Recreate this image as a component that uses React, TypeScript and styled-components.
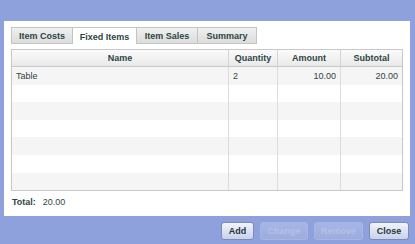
import React from 'react';
import styled, { createGlobalStyle } from 'styled-components';

const GlobalStyle = createGlobalStyle`
  html, body {
    margin: 0;
    padding: 0;
    background: #8ea1dc;
    font-family: 'Liberation Sans', Arial, sans-serif;
  }
`;

const Screen = styled.div`
  width: 415px;
  height: 244px;
  box-sizing: border-box;
  padding: 21px 5px 0 4px;
  display: flex;
  flex-direction: column;
`;

const Panel = styled.div`
  background: #ffffff;
  height: 195px;
  box-sizing: border-box;
  padding: 6px 7px 0 7px;
  display: flex;
  flex-direction: column;
`;

const TabBar = styled.div`
  display: flex;
  height: 17px;
`;

const Tab = styled.div<{ $active?: boolean; $w: number }>`
  width: ${(p) => p.$w}px;
  box-sizing: border-box;
  border: 1px solid #c4c4c4;
  border-bottom: ${(p) => (p.$active ? 'none' : '1px solid #c4c4c4')};
  margin-left: -1px;
  background: ${(p) =>
    p.$active ? '#ffffff' : 'linear-gradient(#f0f0f0, #dcdcdc)'};
  color: #2e4444;
  font-size: 9px;
  font-weight: bold;
  display: flex;
  align-items: center;
  justify-content: center;
  padding-top: ${(p) => (p.$active ? '2px' : '0')};
  &:first-child {
    margin-left: 0;
  }
`;

const Grid = styled.div`
  margin-top: 5px;
  width: 392px;
  box-sizing: border-box;
  border: 1px solid #c8c8c8;
  display: grid;
  grid-template-columns: 216px 49px 63px 1fr;
`;

const HeadCell = styled.div`
  height: 17px;
  box-sizing: border-box;
  background: linear-gradient(#fbfbfb, #e9e9e9);
  border-bottom: 1px solid #c8c8c8;
  border-left: 1px solid #d4d4d4;
  color: #2e4444;
  font-size: 9px;
  font-weight: bold;
  display: flex;
  align-items: center;
  justify-content: center;
  &:first-child {
    border-left: none;
  }
`;

const Cell = styled.div<{ $odd: boolean; $right?: boolean; $first?: boolean }>`
  height: 17.6px;
  box-sizing: border-box;
  background: ${(p) => (p.$odd ? '#f5f5f5' : '#ffffff')};
  border-left: ${(p) => (p.$first ? 'none' : '1px solid #dcdcdc')};
  color: #2e4444;
  font-size: 9px;
  display: flex;
  align-items: center;
  justify-content: ${(p) => (p.$right ? 'flex-end' : 'flex-start')};
  padding: 0 4px;
`;

const TotalLine = styled.div`
  display: flex;
  gap: 7px;
  margin-top: 6px;
  padding-left: 1px;
  font-size: 9px;
  color: #2e4444;
`;

const TotalLabel = styled.span`
  font-weight: bold;
`;

const ButtonRow = styled.div`
  display: flex;
  justify-content: flex-end;
  gap: 6px;
  margin-top: 6px;
  margin-right: 1px;
`;

const Button = styled.div<{ $w: number; $disabled?: boolean }>`
  width: ${(p) => p.$w}px;
  height: 18px;
  box-sizing: border-box;
  border: 1px solid ${(p) => (p.$disabled ? '#a9b6e2' : '#7d8bb8')};
  border-radius: 3px;
  background: ${(p) =>
    p.$disabled
      ? 'linear-gradient(#a7b5e6, #9cacdf)'
      : 'linear-gradient(#f2f4fa, #c9d1ea)'};
  color: ${(p) => (p.$disabled ? '#b5c1e8' : '#1f3540')};
  font-size: 9px;
  font-weight: bold;
  display: flex;
  align-items: center;
  justify-content: center;
`;

const tabs = [
  { label: 'Item Costs', w: 62 },
  { label: 'Fixed Items', w: 65 },
  { label: 'Item Sales', w: 62 },
  { label: 'Summary', w: 60 },
];

const rows = [
  ['Table', '2', '10.00', '20.00'],
  ['', '', '', ''],
  ['', '', '', ''],
  ['', '', '', ''],
  ['', '', '', ''],
  ['', '', '', ''],
  ['', '', '', ''],
];

export default function App() {
  return (
    <>
      <GlobalStyle />
      <Screen>
        <Panel>
          <TabBar>
            {tabs.map((t) => (
              <Tab key={t.label} $w={t.w} $active={t.label === 'Fixed Items'}>
                {t.label}
              </Tab>
            ))}
          </TabBar>
          <Grid>
            <HeadCell>Name</HeadCell>
            <HeadCell>Quantity</HeadCell>
            <HeadCell>Amount</HeadCell>
            <HeadCell>Subtotal</HeadCell>
            {rows.map((r, i) =>
              r.map((v, j) => (
                <Cell key={`${i}-${j}`} $odd={i % 2 === 0} $first={j === 0} $right={j >= 2}>
                  {v}
                </Cell>
              ))
            )}
          </Grid>
          <TotalLine>
            <TotalLabel>Total:</TotalLabel>
            <span>20.00</span>
          </TotalLine>
        </Panel>
        <ButtonRow>
          <Button $w={33}>Add</Button>
          <Button $w={48} $disabled>Change</Button>
          <Button $w={49} $disabled>Remove</Button>
          <Button $w={40}>Close</Button>
        </ButtonRow>
      </Screen>
    </>
  );
}
